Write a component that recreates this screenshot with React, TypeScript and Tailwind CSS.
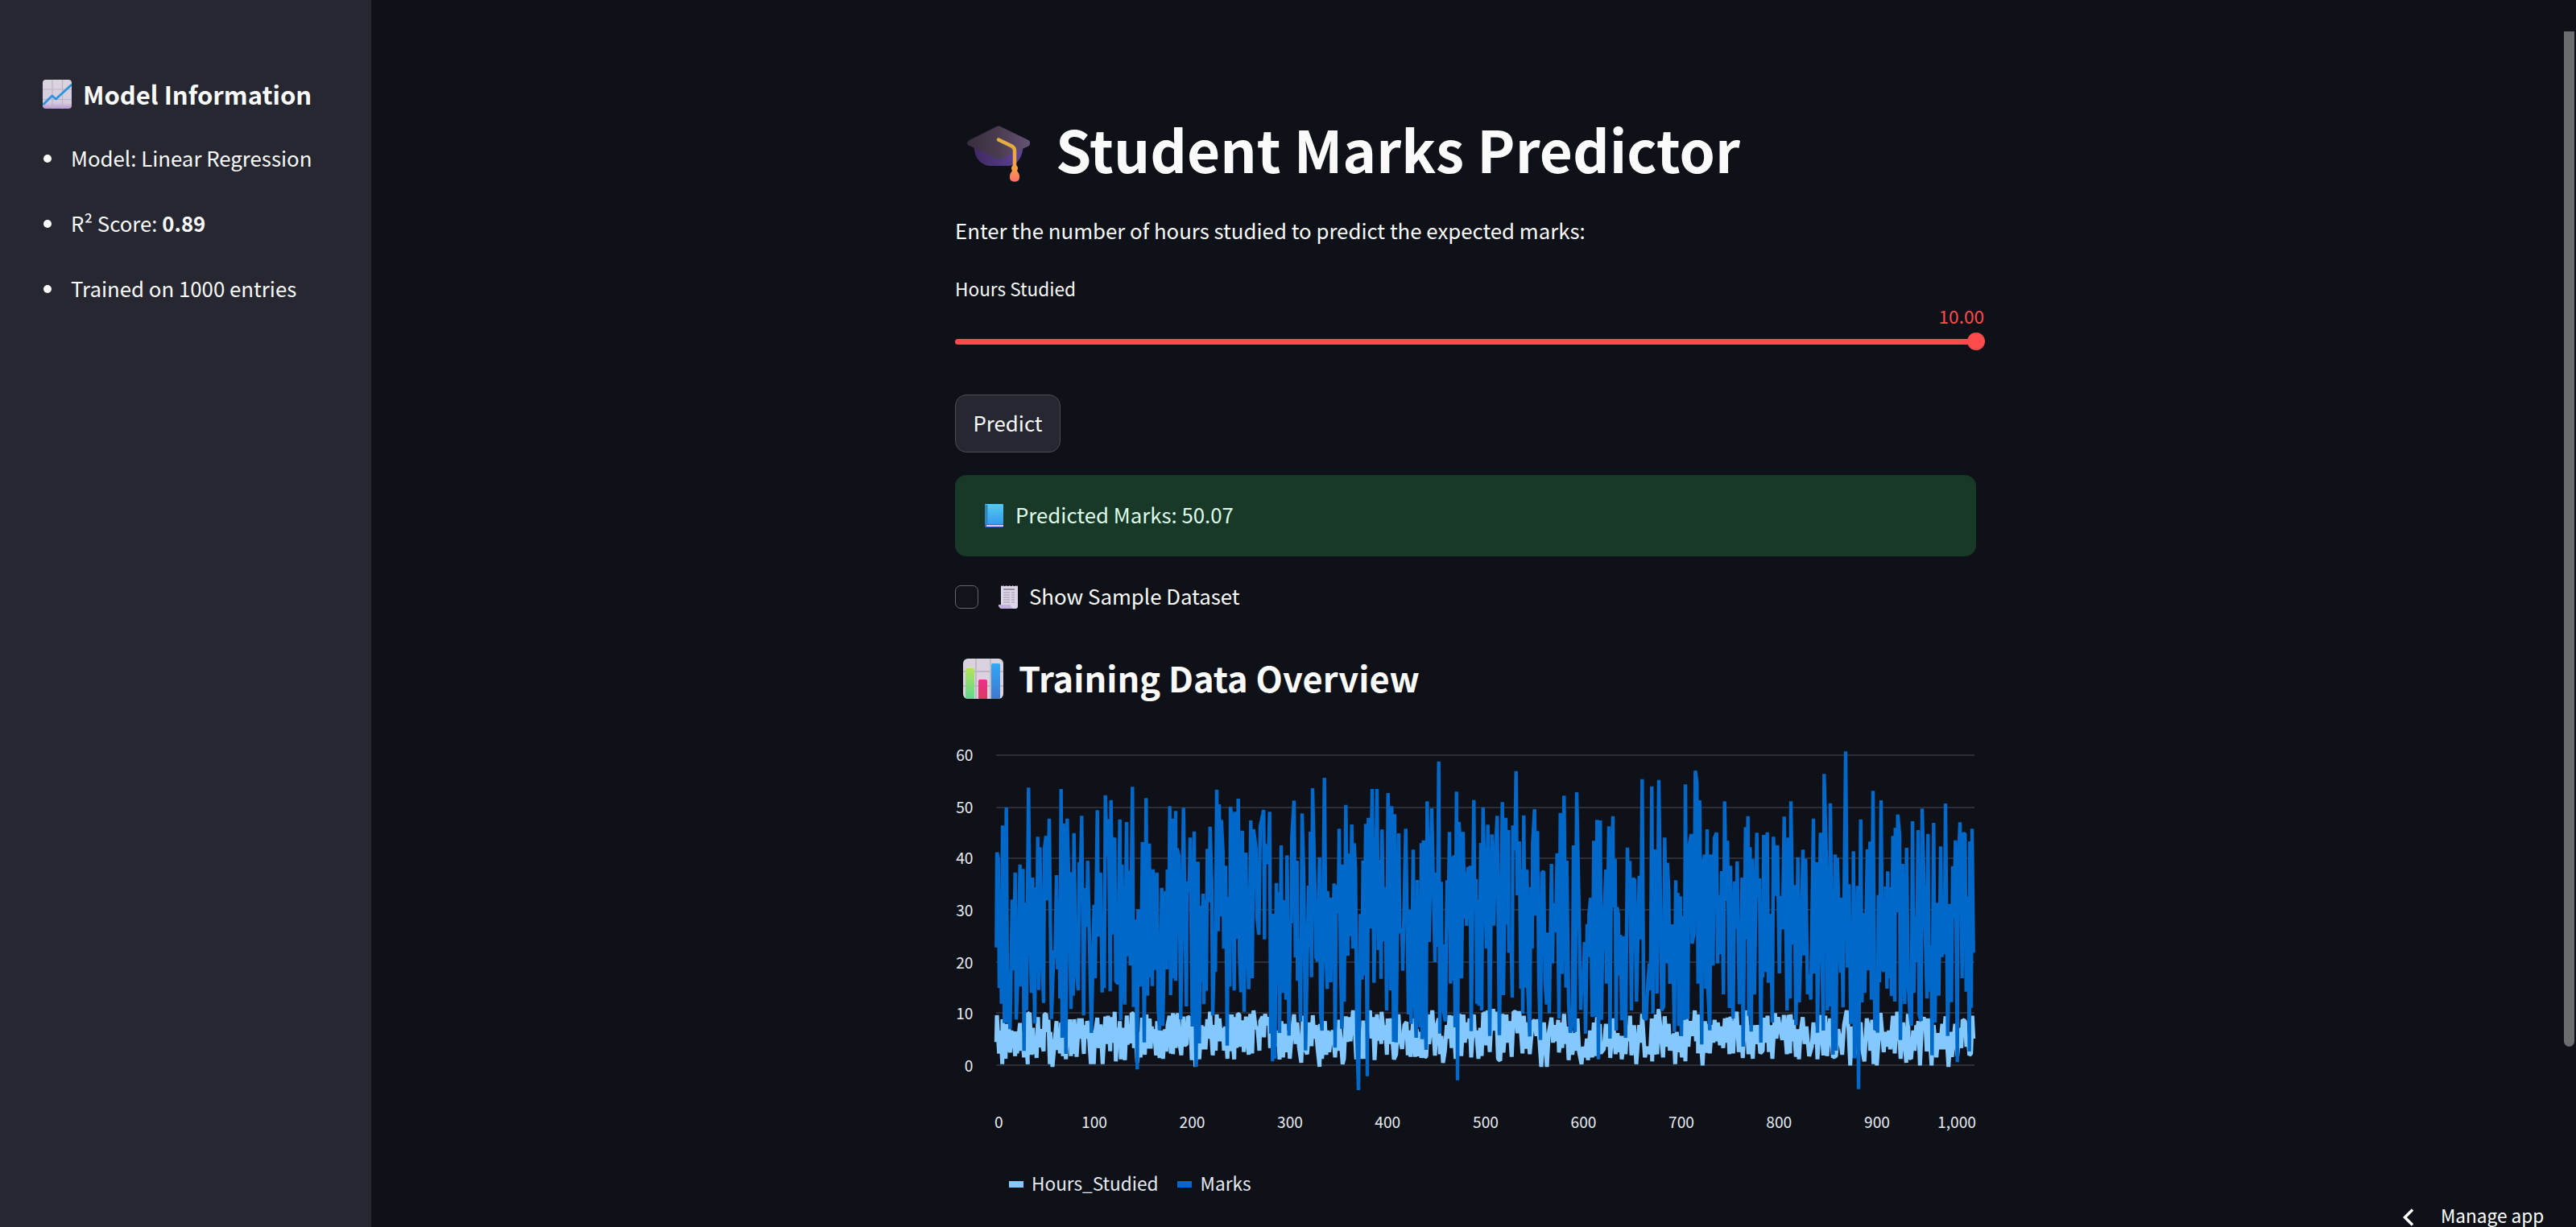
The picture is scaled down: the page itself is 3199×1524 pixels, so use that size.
import React from "react";

const FONT = "font-['Noto_Sans_CJK_JP','Noto_Sans_CJK_SC',sans-serif]";

/* Chart samples, stored in thirds of a pixel. Each segment is [x offset, "x,y x,y ..."]. */
type Segment = [number, string];

const MARKS: Segment[] = [
  [44, "22,770 24,416 29,440 33,922 37,730 41,980 45,316 52,1052 59,249 64,1052 68,860 73,1075 81,592 85,856 92,491 96,1039 103,850 110,461 114,916 121,478 125,1156 130,603 134,1005 142,175 147,700 153,940 157,510 165,1054 168,547 172,860 176,358 180,929 184,397 190,730 198,977 201,402 207,355 213,595 219,290 227,1037 236,780 241,810 246,501 250,852 255,593 259,961 263,180 267,1107 272,308 276,500 281,1167 286,290 293,580 300,1000 304,490 308,950 311,344 318,840 327,930 331,452 335,520 340,280 347,1024 352,550 355,560 359,694 362,447 368,710 376,1089 386,611 390,885 398,259 402,730 410,491 416,938 419,780 424,922 428,203 434,430 440,292 446,934 449,221 455,722 460,367 463,362 467,895 474,905 482,293 485,1042 490,461 496,850 500,983 507,303 511,803 517,484 521,838 529,172 533,992 539,667 543,900 547,1225 550,628 553,900 556,632 560,916 566,377 573,1124 580,214 585,950 592,383 595,882 599,535 603,914 606,479 614,854 620,491 625,1000 630,1079 638,548 642,1063 652,560 657,852 659,480 664,735 668,244 671,948 680,290 684,885 690,262 690,895 695,401 702,430 709,1038 719,250 724,600 730,990 732,525 740,565 744,361 752,1065 759,338 763,1000 766,1215 773,451 778,1128 783,615 788,900 792,570 795,982 799,592 804,932 808,403 815,602 818,320 824,520 828,1024 833,815 838,861 843,182 848,710 852,237 858,655 860,295 866,412 869,775 876,466 882,1136 886,582 892,916 894,246 900,290 908,931 911,265 917,738 923,216 928,800 933,937 938,335 945,1010 951,417 955,648 962,926 970,297 975,885 980,330 989,400 993,660 1000,723 1005,320 1018,258 1021,740 1022,385 1032,425 1035,460 1040,265 1044,1091 1048,675 1051,1195 1054,645 1060,1185 1065,530 1069,908 1074,565 1077,1089 1083,390 1087,940 1092,700 1096,594 1101,965 1105,427 1112,1099 1117,676 1121,680 1123,358 1131,223 1136,808 1142,447 1144,895 1149,738 1155,1046 1161,271 1167,500 1174,1154 1185,540 1190,770 1192,339 1196,881 1200,177 1209,560 1213,808 1219,822 1226,434"],
  [454, "0,1015 5,1080 14,138 20,800 25,925 26,560 31,900 36,585 38,900 42,608 45,850 50,532 54,1144 58,538 66,643 69,328 74,800 79,1073 83,461 88,973 94,239 101,802 105,421 111,728 116,312 120,775 125,382 130,480 135,1090 141,1302 148,646 154,890 158,446 162,875 168,310 174,1250 178,287 184,700 192,180 199,902 210,180 216,780 220,445 225,887 229,331 235,748 241,545 246,1005 251,195 261,930 265,244 272,1122 276,274 281,1124 286,700 291,345 295,717 303,700 306,857 317,328 323,700 327,1020 334,629 337,1055 345,406 349,942 356,1107 360,519 364,900 371,1068 375,382 378,1112 383,371 387,950 393,1152 397,226 404,750 414,252 426,825 429,491 435,768 440,77 444,1091 449,526 453,940 457,759 458,1008 465,1046 471,520 475,704 480,340 484,905 488,432 492,894 497,427 501,1068 506,190 510,1265 515,303 520,366 525,886 531,340 536,663 541,490 544,690 549,470 552,665 557,466 561,1082 571,221 574,610 579,515 582,980 587,592 590,988 597,381 600,1005 605,248 611,500 618,775 623,313 630,1100 638,349 645,689 652,400 658,280 666,1097 677,229 681,948 690,287 692,685 700,333 701,790 710,750 714,957 716,316 724,408 728,113 733,576 740,375 746,925 750,480 753,1017 757,278 762,920 769,481 772,920 779,1102 783,545 788,775 790,383 797,255 801,652 808,337 813,900 819,1115 824,493 831,486 836,900 842,983 846,715 852,1016 860,459 864,830 867,605 876,714 881,419 888,1035 893,269 899,869 907,205 914,920 917,447 924,980 930,1088 938,1050 942,390 948,1085 954,192 962,598 969,1003 973,895 978,938 983,750 987,1092 993,683 998,805 1000,646 1006,586 1012,1030 1018,373 1022,1028 1026,700 1030,295 1035,1187 1042,297 1046,1040 1050,800 1056,650 1063,480 1065,905 1074,319 1078,1110 1082,600 1089,281 1091,622 1097,441 1101,1080 1104,620 1109,645 1112,875 1117,723 1122,1042 1128,728 1136,1107 1143,398 1147,628 1152,448 1158,1005 1163,514 1170,518 1177,973 1187,503 1193,740 1198,143 1204,1032 1213,1040 1218,920 1225,830 1229,930"],
  [864, "4,170 8,1017 13,406 20,430 23,942 30,146 36,600 41,1005 48,990 52,361 61,830 62,455 67,560 71,906 76,710 81,685 88,1085 93,520 97,870 101,567 104,1063 110,580 114,1101 120,653 125,1040 129,163 134,965 138,1037 142,399 151,348 154,756 161,720 166,112 172,157 176,905 182,222 190,1132 193,469 201,425 205,925 210,330 213,930 220,1079 224,424 232,838 237,363 245,343 249,830 255,575 260,795 264,486 271,945 275,226 281,597 286,373 293,996 297,466 302,900 307,1035 312,524 319,700 322,449 330,982 334,670 337,950 340,510 344,1140 353,322 357,740 362,281 365,1025 370,397 374,1084 379,441 386,946 395,343 398,582 405,513 410,1125 414,725 417,882 421,351 430,862 434,341 438,902 446,645 453,1050 457,358 466,578 472,389 479,867 483,579 491,702 497,283 502,600 508,1005 512,361 519,961 522,226 530,760 535,538 541,1060 548,434 553,975 558,800 567,406 571,800 577,440 584,945 590,870 596,965 606,290 609,868 617,452 621,1088 632,343 636,700 643,1080 646,124 656,515 658,1005 663,543 667,990 669,233 679,1170 687,424 690,1155 695,436 703,720 707,865 711,585 716,994 726,40 733,845 739,535 745,1055 749,690 752,1050 755,412 759,1184 770,541 774,1298 782,293 787,975 791,642 797,940 807,404 812,856 817,376 822,965 828,187 835,1078 840,892 845,1088 848,575 852,900 858,222 863,850 869,860 875,543 880,924 883,487 888,885 892,546 897,952 902,355 909,972 911,325 919,640 920,275 927,350 930,1115 938,459 946,981 953,399 959,900 965,1015 971,1062 975,300 980,940 985,655 990,825 996,333 1000,1022 1007,1044 1011,253 1020,610 1029,961 1033,347 1037,935 1045,763 1048,1172 1054,306 1059,1050 1064,604 1068,890 1071,660 1073,950 1080,394 1085,806 1089,598 1094,796 1098,234 1106,1100 1115,608 1120,974 1125,467 1130,662 1135,371 1142,1198 1144,504 1152,304 1160,885 1163,347 1171,346 1175,935 1181,580 1187,1158 1189,375 1194,995 1197,328 1202,790"],
];

const HOURS: Segment[] = [
  [44, "22,1123 24,1023 32,1166 38,1080 44,1205 45,1038 56,1185 60,1055 64,1157 68,1060 73,1162 78,1080 82,1143 86,1105 92,1175 93,1083 99,1165 104,1110 110,1052 114,1155 118,1085 125,1180 130,1080 139,1205 137,1020 146,1015 153,1170 158,1070 162,1167 166,1100 172,1182 177,1030 181,1142 186,1075 192,1130 198,1157 201,1020 207,1018 213,1085 216,1040 221,1205 223,1085 231,1215 241,1105 246,1045 250,1152 255,1100 259,1165 263,1050 270,1175 276,1100 281,1187 288,1060 293,1100 296,1038 300,1175 305,1090 308,1167 312,1038 321,1178 330,1035 335,1110 340,1035 348,1167 352,1060 358,1110 360,1045 364,1055 374,1205 380,1080 385,1205 390,1090 398,1032 403,1145 410,1057 418,1205 428,1028 434,1130 438,1025 446,1157 449,1030 456,1125 463,1010 467,1195 474,1070 477,1142 482,1045 486,1187 491,1070 501,1190 508,1024 511,1133 516,1060 521,1127 526,1015 532,1018 535,1145 541,1080 547,1200 556,1085 559,1180 565,1032 575,1170 581,1020 585,1147 593,1035 597,1147 601,1065 606,1125 610,1075 617,1172 621,1045 630,1182 634,1080 643,1185 650,1075 655,1158 660,1060 667,1025 672,1165 680,1015 680,1168 685,1020 690,1145 698,1015 704,1125 711,1172 718,1028 724,1135 731,1130 735,1028 745,1035 750,1190 756,1065 764,1215 770,1060 778,1187 786,1060 791,1150 796,1065 801,1150 808,1038 812,1110 818,1010 828,1172 836,1060 839,1155 843,1020 848,1120 853,1035 860,1120 866,1070 870,1155 875,1065 883,1185 889,1020 893,1157 899,1020 903,1120 908,1187 911,1030 917,1145 921,1018 927,1020 931,1140 938,1042 944,1160 952,1028 962,1170 968,1018 975,1165 980,1005 988,1070 995,1070 1002,1155 1005,1045 1014,1028 1019,1105 1023,1018 1030,1060 1038,1030 1042,1145 1048,1080 1055,1185 1060,1080 1067,1140 1072,1080 1077,1188 1084,1045 1090,1180 1097,1055 1102,1160 1110,1080 1115,1185 1122,1100 1131,1020 1137,1130 1143,1050 1150,1145 1158,1200 1164,1025 1170,1145 1180,1168 1188,1050 1196,1138 1201,1023 1206,1110 1212,1060 1218,1140 1226,1215 1228,1055"],
  [454, "5,1185 16,1045 21,1170 27,1080 32,1160 38,1100 46,1080 54,1180 60,1070 65,1155 69,1040 76,1120 82,1205 87,1185 94,1027 99,1122 106,1030 111,1120 121,1005 126,1050 133,1187 148,1090 154,1185 159,1043 165,1185 174,1060 184,1005 189,1110 195,1030 201,1190 210,1020 216,1118 220,1040 226,1130 227,1010 237,1115 241,1060 247,1170 250,1035 256,1130 262,1035 273,1187 281,1170 290,1020 296,1115 304,1148 312,1060 320,1048 325,1172 330,1080 335,1178 345,1035 352,1178 358,1075 365,1175 371,1085 375,1182 383,1065 388,1180 394,1175 400,1020 404,1130 416,1005 426,1173 433,1060 440,1035 445,1168 450,1100 456,1200 463,1155 470,1060 475,1110 480,1023 488,1145 494,1025 503,1185 510,1065 517,1018 524,1175 532,1020 537,1125 545,1050 550,1110 555,1035 561,1180 571,1020 575,1105 580,1080 588,1185 595,1070 600,1175 606,1015 612,1018 617,1135 622,1005 630,1160 636,1050 643,1000 649,1080 655,1010 661,1185 669,1192 677,1018 681,1162 692,1020 697,1125 703,1045 712,1178 719,1010 728,1012 733,1090 740,1008 746,1080 752,1165 757,1025 765,1148 770,1050 779,1168 790,1050 797,1040 804,1100 810,1038 822,1215 832,1050 843,1215 850,1090 860,1032 866,1125 873,1060 880,1120 885,1040 888,1162 899,1050 900,1145 907,1018 914,1130 918,1065 924,1190 933,1080 938,1170 946,1090 951,1155 957,1035 963,1160 972,1205 978,1140 985,1180 992,1110 996,1190 1004,1080 1012,1180 1018,1050 1022,1175 1030,1030 1035,1170 1040,1055 1043,1165 1055,1150 1063,1055 1068,1140 1074,1060 1079,1182 1089,1035 1099,1168 1106,1090 1112,1160 1117,1100 1122,1187 1132,1100 1136,1168 1143,1060 1148,1120 1153,1025 1158,1172 1168,1060 1176,1205 1187,1060 1193,1125 1198,1018 1208,1180 1217,1140 1222,1160 1228,1165"],
  [864, "4,1035 5,1195 10,1040 14,1170 19,1020 24,1168 29,1000 35,1060 40,1120 46,1180 52,1027 60,1140 67,1055 71,1155 78,1095 82,1155 86,1090 91,1205 97,1085 103,1160 108,1100 116,1180 125,1040 129,1195 133,1025 140,1140 147,1045 158,1100 164,1005 169,1120 176,1020 176,1165 181,1025 193,1210 202,1045 207,1163 213,1055 220,1165 228,1060 233,1125 238,1040 243,1120 250,1050 258,1135 264,1065 270,1145 276,1035 282,1125 287,1032 293,1168 297,1028 307,1165 313,1050 320,1010 328,1160 335,1060 343,1182 349,1065 356,1005 364,1168 370,1060 380,1185 386,1060 392,1130 400,1060 408,1165 417,1155 421,1032 428,1125 435,1025 440,1160 446,1060 453,1185 463,1015 468,1110 475,1030 482,1075 490,1115 496,1022 507,1168 513,1022 519,1165 521,1020 527,1120 532,1040 541,1178 547,1075 552,1187 558,1090 566,1030 573,1130 580,1065 590,1175 600,1140 606,1050 612,1130 617,1070 621,1187 632,1022 643,1172 650,1025 657,1175 668,1035 679,1180 690,1175 698,1075 705,1105 713,1170 720,1060 730,1005 737,1080 743,1210 750,1065 758,1180 770,1080 782,1050 788,1150 796,1195 805,1035 813,1075 818,1155 825,1040 830,1205 838,1080 842,1210 850,1100 856,1015 868,1160 874,1085 880,1140 887,1080 892,1150 902,1025 909,1165 918,1010 924,1060 931,1185 940,1050 952,1200 958,1018 963,1180 970,1185 978,1080 983,1155 989,1060 990,1115 997,1045 1003,1210 1010,1060 1017,1030 1024,1070 1028,1158 1033,1035 1040,1110 1046,1210 1054,1060 1064,1180 1072,1090 1078,1150 1086,1055 1090,1150 1098,1027 1109,1215 1118,1085 1122,1178 1134,1055 1142,1175 1150,1070 1157,1145 1162,1040 1171,1045 1176,1140 1181,1090 1187,1172 1193,1165 1198,1025 1202,1110"],
];

function toPoints(segments: Segment[]): string {
  return segments
    .map(([dx, s]) =>
      s
        .split(" ")
        .map((p) => {
          const [x, y] = p.split(",").map(Number);
          return `${(dx + x / 3).toFixed(1)},${(y / 3).toFixed(1)}`;
        })
        .join(" ")
    )
    .join(" ");
}

const Y_TICKS: [string, number][] = [
  ["60", 18], ["50", 82.7], ["40", 145.7], ["30", 210.3], ["20", 275.3], ["10", 338.3], ["0", 403.3],
];
const X_TICKS: [string, number][] = [
  ["100", 173], ["200", 294.5], ["300", 416], ["400", 537.3], ["500", 659],
  ["600", 780.5], ["700", 902], ["800", 1023.3], ["900", 1145],
];

function Chart() {
  return (
    <svg width="1268" height="500" viewBox="0 0 1268 500" className="block shrink-0 overflow-visible">
      {Y_TICKS.map(([label, y]) => (
        <g key={label}>
          <rect x="51" y={Math.round(y) - 1} width="1215" height="2" fill="#2b2d37" />
          <text x="22.5" y={y + 7.2} textAnchor="end" fontSize="19.2" fill="#e6eaf1">{label}</text>
        </g>
      ))}
      <polyline points={toPoints(HOURS)} fill="none" stroke="#83c9ff" strokeWidth="5" strokeLinejoin="bevel" />
      <polyline points={toPoints(MARKS)} fill="none" stroke="#0068c9" strokeWidth="4.4" strokeLinejoin="bevel" />
      <g fontSize="19.2" fill="#e6eaf1">
        <text x="49" y="481">0</text>
        {X_TICKS.map(([label, x]) => (
          <text key={label} x={x} y="481" textAnchor="middle">{label}</text>
        ))}
        <text x="1268" y="481" textAnchor="end">1,000</text>
      </g>
    </svg>
  );
}

function GridPaper({ id }: { id: string }) {
  return (
    <>
      <defs>
        <linearGradient id={id} x1="0" y1="0" x2="0" y2="1">
          <stop offset="0" stopColor="#dcd5df" />
          <stop offset="0.8" stopColor="#d5cbe0" />
          <stop offset="1" stopColor="#b796cf" />
        </linearGradient>
      </defs>
      <rect width="36" height="36" rx="4" fill={`url(#${id})`} />
      <path d="M12 0V36M24.5 0V36M0 12H36M0 24.5H36" stroke="#bdb4c2" strokeWidth="1.2" />
    </>
  );
}

function TrendIcon() {
  return (
    <svg width="36" height="36" viewBox="0 0 36 36" className="block shrink-0">
      <GridPaper id="paper-trend" />
      <path d="M0.5 31L11.7 20L16.5 24L36 6" fill="none" stroke="#2f93dc" strokeWidth="2.8" strokeLinejoin="round" />
    </svg>
  );
}

function BarsIcon() {
  return (
    <svg width="50" height="50" viewBox="0 0 50 50" className="block shrink-0">
      <defs>
        <linearGradient id="bar-green" x1="0" y1="0" x2="0" y2="1">
          <stop offset="0" stopColor="#b4e35a" /><stop offset="1" stopColor="#5dd98e" />
        </linearGradient>
        <linearGradient id="bar-pink" x1="0" y1="0" x2="0" y2="1">
          <stop offset="0" stopColor="#ef2f8b" /><stop offset="1" stopColor="#d93a63" />
        </linearGradient>
        <linearGradient id="bar-blue" x1="0" y1="0" x2="0" y2="1">
          <stop offset="0" stopColor="#31a8f6" /><stop offset="1" stopColor="#3f78cf" />
        </linearGradient>
        <clipPath id="bars-clip"><rect width="50" height="50" rx="6" /></clipPath>
      </defs>
      <g clipPath="url(#bars-clip)">
        <rect width="50" height="50" fill="#dad3df" />
        <path d="M16 0V50M34 0V50M0 16H50M0 34H50" stroke="#bfb7c3" strokeWidth="1.8" />
        <path d="M3 50V14q0-2 2-2h7q2 0 2 2V50z" fill="url(#bar-green)" />
        <path d="M19 50V28q0-2 2-2h7q2 0 2 2V50z" fill="url(#bar-pink)" />
        <path d="M35 50V8q0-2 2-2h7q2 0 2 2V50z" fill="url(#bar-blue)" />
      </g>
    </svg>
  );
}

function CapIcon() {
  return (
    <svg width="78" height="70" viewBox="0 0 78 70" className="block shrink-0">
      <defs>
        <linearGradient id="cap-top" x1="0" y1="0" x2="1" y2="0">
          <stop offset="0" stopColor="#382f3e" /><stop offset="0.5" stopColor="#493c4f" /><stop offset="1" stopColor="#665275" />
        </linearGradient>
        <linearGradient id="cap-base" x1="0" y1="0" x2="1" y2="0">
          <stop offset="0" stopColor="#3f2a61" /><stop offset="1" stopColor="#5f4296" />
        </linearGradient>
        <linearGradient id="tassel" x1="0" y1="0" x2="0" y2="70" gradientUnits="userSpaceOnUse">
          <stop offset="0.2" stopColor="#e0b03e" /><stop offset="0.75" stopColor="#f5a244" /><stop offset="1" stopColor="#ff6d6d" />
        </linearGradient>
      </defs>
      <path d="M8 20h62c0 12-3 22-10 27q-4 3-8 3H28q-5 0-9-3C11 42 8 32 8 20z" fill="url(#cap-base)" />
      <path d="M37 1q2-1 4 0l35 17q3 2 2 5q0 2-3 3L42 41q-3 1-5 0L3 25q-3-1-3-3t3-4z" fill="url(#cap-top)" />
      <path d="M39 17.500L55.500 25.500Q59 27.500 59 31V50" fill="none" stroke="url(#tassel)" strokeWidth="4.500" strokeLinecap="round" />
      <path d="M56 50q3-2 6 0q2 3 0 6q5 6 2 12q-5 3.500-10 0q-3-6 2-12q-2-3 0-6z" fill="url(#tassel)" />
    </svg>
  );
}

function BookIcon() {
  return (
    <svg width="23" height="29" viewBox="0 0 23 29" className="block shrink-0">
      <defs>
        <linearGradient id="book" x1="0" y1="0" x2="0" y2="1">
          <stop offset="0" stopColor="#52cbf3" /><stop offset="1" stopColor="#389bea" />
        </linearGradient>
      </defs>
      <rect width="23" height="29" rx="1.5" fill="#3b62c4" />
      <path d="M2 26h21v2H2z" fill="#d8c8ee" />
      <rect width="23" height="25" rx="1" fill="url(#book)" />
      <path d="M0 1h3.500v24H0z" fill="#2f86bd" />
    </svg>
  );
}

function ReceiptIcon() {
  return (
    <svg width="24" height="29" viewBox="0 0 24 29" className="block shrink-0">
      <path d="M3 0l1 1.200 1.700-1 2 1 2-1 2 1 2-1 2 1 2-1 2 1 2-1 1.300 1L24 0v26q0 3-3 3H3q-3-2-3-5h3z" fill="#dcd6e6" />
      <path d="M0 24h15q0 4 4 5H4q-4-1-4-5z" fill="#c3afe0" />
      <path d="M6 5h14" stroke="#8f8799" strokeWidth="1.800" />
      <path d="M6 9h8M16 9h4M6 12h8M16 12h4M6 15h8M16 15h4M6 18h8M16 18h4M6 21h8M16 21h4" stroke="#a198ac" strokeWidth="1.200" />
    </svg>
  );
}

function Sidebar() {
  const items: React.ReactNode[] = [
    "Model: Linear Regression",
    <>R² Score: <b className="font-bold">0.89</b></>,
    "Trained on 1000 entries",
  ];
  return (
    <aside className="flex h-full w-[461px] shrink-0 flex-col bg-[#262730] pt-[96px] pl-[53px]">
      <h3 className="flex h-[42px] items-center gap-[14px] text-[31px] font-bold">
        <TrendIcon />
        <span className="-mt-[2px]">Model Information</span>
      </h3>
      <ul className="mt-[37px] flex flex-col gap-[39px] text-[25.8px]">
        {items.map((item, i) => (
          <li key={i} className="flex h-[42px] items-center gap-6">
            <i className="ml-[1px] mt-[2px] block size-[10px] rounded-full bg-[#fafafa]" />
            <span>{item}</span>
          </li>
        ))}
      </ul>
    </aside>
  );
}

export default function App() {
  return (
    <div className={`relative flex h-[1524px] w-[3199px] overflow-hidden whitespace-nowrap bg-[#0e1117] leading-none text-[#fafafa] ${FONT}`}>
      <Sidebar />
      <main className="ml-[725px] flex w-[1268px] flex-col pt-[139px]">
        <h1 className="flex h-[90px] shrink-0 items-center pl-[15px] text-[71px] font-bold">
          <span className="mt-[13px]"><CapIcon /></span>
          <span className="ml-[32px]">Student Marks Predictor</span>
        </h1>
        <p className="mt-9 flex h-[42px] items-center text-[25.8px]">
          Enter the number of hours studied to predict the expected marks:
        </p>
        <div className="mt-[35px] flex h-8 items-center pt-[2px] text-[22.6px]">Hours Studied</div>
        <div className="-mr-[10px] mt-[3px] flex h-[29px] items-center justify-end pt-[3px] text-[22.6px] text-[#ff4b4b]">10.00</div>
        <div className="mt-[7px] -mr-[11px] flex h-[22px] items-center">
          <div className="h-[7px] flex-1 rounded-l-full bg-[#ff4b4b]" />
          <div className="-ml-1 size-[22px] rounded-full bg-[#ff4b4b]" />
        </div>
        <button className="mt-[55px] flex h-[72px] w-[131px] shrink-0 items-center justify-center rounded-[14px] border border-[#4a4c55] bg-[#262730] pb-[2px] text-[25.8px]">
          Predict
        </button>
        <div className="mt-7 flex h-[101px] shrink-0 items-center rounded-[14px] bg-[#183828] pl-[37px] text-[25.8px] text-[#dffde9]">
          <BookIcon />
          <span className="ml-[15px] -mt-[3px]">Predicted Marks: 50.07</span>
        </div>
        <label className="mt-[29px] flex h-10 items-center text-[25.8px]">
          <i className="mt-[3px] block size-[29px] rounded-[7px] border border-[#64666e] bg-[#11141b]" />
          <span className="ml-[25px] mt-[2px]"><ReceiptIcon /></span>
          <span className="ml-[14px]">Show Sample Dataset</span>
        </label>
        <h2 className="mt-[50px] flex h-16 shrink-0 items-center pl-[10px] text-[43.4px] font-bold">
          <span className="mt-[2px]"><BarsIcon /></span>
          <span className="ml-[19px]">Training Data Overview</span>
        </h2>
        <div className="mt-[46px]"><Chart /></div>
        <div className="mt-[31px] flex h-10 shrink-0 items-center pl-[67px] text-[22.6px] text-[#e6eaf1]">
          <i className="block h-2 w-[18px] bg-[#83c9ff]" />
          <span className="ml-[10px] -mt-[1px]">Hours_Studied</span>
          <i className="ml-[23px] block h-2 w-[18px] bg-[#0068c9]" />
          <span className="ml-[11px] -mt-[1px]">Marks</span>
        </div>
      </main>
      <div className="absolute right-[2px] top-[39px] h-[1261px] w-[13px] rounded-b-full bg-[#6b6c70]" />
      <div className="absolute left-[2984px] top-[1492px] flex h-[34px] items-center text-[22.6px] text-white">
        <svg width="14" height="22" viewBox="0 0 14 22" className="mt-[6px] block">
          <path d="M12 1.500L2.500 11L12 20.500" fill="none" stroke="#fff" strokeWidth="3.500" />
        </svg>
        <span className="ml-[33px] mt-[3px]">Manage app</span>
      </div>
    </div>
  );
}
